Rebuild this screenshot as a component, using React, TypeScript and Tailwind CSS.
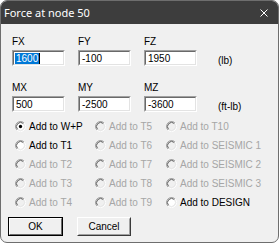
import React from "react";

const font = { fontFamily: '"Liberation Sans", Arial, sans-serif' };

function Radio({ checked = false, disabled = false }: { checked?: boolean; disabled?: boolean }) {
  return (
    <svg width="11" height="11" viewBox="0 0 12 12" className="shrink-0">
      <circle cx="6" cy="6" r="4.5" fill={disabled ? "#f0f0f0" : "#ffffff"} />
      <path d="M2.11 9.89 A5.5 5.5 0 0 1 9.89 2.11" stroke="#a0a0a0" strokeWidth="1" fill="none" />
      <path d="M9.89 2.11 A5.5 5.5 0 0 1 2.11 9.89" stroke="#ffffff" strokeWidth="1" fill="none" />
      <path d="M2.82 9.18 A4.5 4.5 0 0 1 9.18 2.82" stroke="#505050" strokeWidth="1" fill="none" />
      <path d="M9.18 2.82 A4.5 4.5 0 0 1 2.82 9.18" stroke="#e3e3e3" strokeWidth="1" fill="none" />
      {checked && <circle cx="6" cy="6" r="1.8" fill="#000000" />}
    </svg>
  );
}

function RadioItem({ label, checked = false, disabled = false, w }: { label: string; checked?: boolean; disabled?: boolean; w: string }) {
  return (
    <div className={`flex items-center h-[19px] ${w}`}>
      <Radio checked={checked} disabled={disabled} />
      <span className={`ml-[3px] text-[10px] leading-[12px] whitespace-nowrap ${disabled ? "text-[#a6a6a6]" : "text-black"}`}>{label}</span>
    </div>
  );
}

function Edit({ value, selected = false }: { value: string; selected?: boolean }) {
  return (
    <div className="w-[53px] h-[16px] border border-t-[#a0a0a0] border-l-[#a0a0a0] border-b-white border-r-white">
      <div className="w-full h-full bg-white border border-t-[#696969] border-l-[#696969] border-b-[#e3e3e3] border-r-[#e3e3e3] flex items-center pl-[1px]">
        {selected ? (
          <span className="flex items-center">
            <span className="bg-[#0078d7] text-white text-[10px] leading-[11px] px-[1px]">{value}</span>
            <span className="w-[1px] h-[11px] bg-black" />
          </span>
        ) : (
          <span className="text-black text-[10px] leading-[11px] px-[1px]">{value}</span>
        )}
      </div>
    </div>
  );
}

function Field({ label, value, selected }: { label: string; value: string; selected?: boolean }) {
  return (
    <div className="flex flex-col w-[53px]">
      <span className="text-[10px] leading-[12px] text-black h-[14px]">{label}</span>
      <Edit value={value} selected={selected} />
    </div>
  );
}

export default function App() {
  return (
    <div className="w-[279px] h-[243px] bg-white" style={font}>
      <div className="w-[279px] h-[243px] rounded-[7px] overflow-hidden border border-[#6e6e6e] bg-[#f0f0f0] flex flex-col">
        <div className="h-[23px] bg-[#3d3d3d] flex items-center justify-between pl-[3px] pr-[10px] shrink-0">
          <span className="text-white text-[11px] leading-[13px]" style={{ fontFamily: '"Noto Sans", "Liberation Sans", sans-serif' }}>Force at node 50</span>
          <svg width="8" height="8" viewBox="0 0 8 8">
            <path d="M0.5 0.5 L7.5 7.5 M7.5 0.5 L0.5 7.5" stroke="#ffffff" strokeWidth="1" />
          </svg>
        </div>
        <div className="flex flex-col pl-[11px] pt-[12px]">
          <div className="flex items-end">
            <div className="flex gap-[13px]">
              <Field label="FX" value="1600" selected />
              <Field label="FY" value="-100" />
              <Field label="FZ" value="1950" />
            </div>
            <span className="ml-[21px] mb-[-1px] text-[10px] leading-[12px] text-black">(lb)</span>
          </div>
          <div className="flex items-end mt-[16px]">
            <div className="flex gap-[13px]">
              <Field label="MX" value="500" />
              <Field label="MY" value="-2500" />
              <Field label="MZ" value="-3600" />
            </div>
            <span className="ml-[21px] mb-[-1px] text-[10px] leading-[12px] text-black">(ft-lb)</span>
          </div>
          <div className="flex flex-col mt-[5px] pl-[3px]">
            <div className="flex">
              <RadioItem w="w-[80px]" label="Add to W+P" checked />
              <RadioItem w="w-[71px]" label="Add to T5" disabled />
              <RadioItem w="w-[100px]" label="Add to T10" disabled />
            </div>
            <div className="flex">
              <RadioItem w="w-[80px]" label="Add to T1" />
              <RadioItem w="w-[71px]" label="Add to T6" disabled />
              <RadioItem w="w-[100px]" label="Add to SEISMIC 1" disabled />
            </div>
            <div className="flex">
              <RadioItem w="w-[80px]" label="Add to T2" disabled />
              <RadioItem w="w-[71px]" label="Add to T7" disabled />
              <RadioItem w="w-[100px]" label="Add to SEISMIC 2" disabled />
            </div>
            <div className="flex">
              <RadioItem w="w-[80px]" label="Add to T3" disabled />
              <RadioItem w="w-[71px]" label="Add to T8" disabled />
              <RadioItem w="w-[100px]" label="Add to SEISMIC 3" disabled />
            </div>
            <div className="flex">
              <RadioItem w="w-[80px]" label="Add to T4" disabled />
              <RadioItem w="w-[71px]" label="Add to T9" disabled />
              <RadioItem w="w-[100px]" label="Add to DESIGN" />
            </div>
          </div>
          <div className="flex gap-[14px] mt-[5px] -ml-[4px]">
            <div className="w-[55px] h-[19px] border border-black">
              <div className="w-full h-full border border-t-white border-l-white border-b-[#696969] border-r-[#696969] bg-[#f0f0f0] flex items-center justify-center text-[10px] leading-[12px] text-black">OK</div>
            </div>
            <div className="w-[54px] h-[19px] border border-t-white border-l-white border-b-[#3a3a3a] border-r-[#3a3a3a]">
              <div className="w-full h-full border border-t-[#f0f0f0] border-l-[#f0f0f0] border-b-[#a0a0a0] border-r-[#a0a0a0] bg-[#f0f0f0] flex items-center justify-center text-[10px] leading-[12px] text-black">Cancel</div>
            </div>
          </div>
        </div>
      </div>
    </div>
  );
}
